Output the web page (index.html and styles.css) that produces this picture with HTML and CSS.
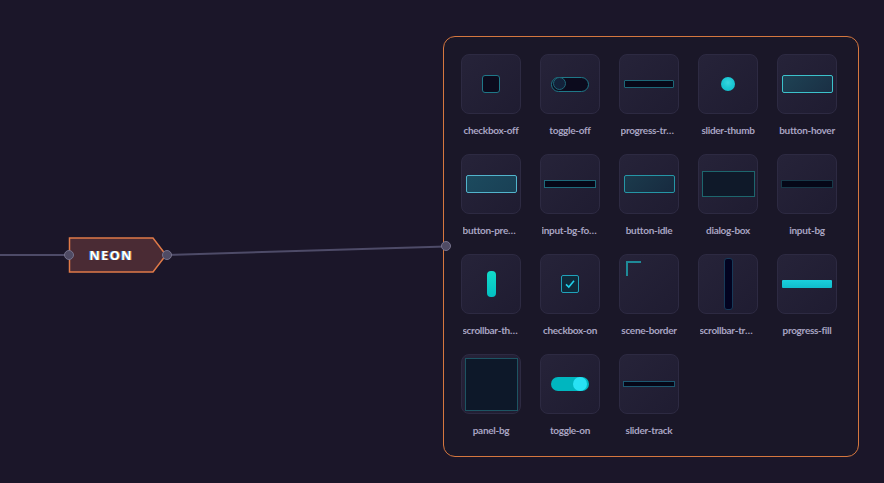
FILE: index.html
```html
<!DOCTYPE html>
<html lang="en">
<head>
  <meta charset="UTF-8">
  <meta name="viewport" content="width=device-width, initial-scale=1.0">
  <title>Neon Theme Graph</title>
  <link rel="stylesheet" href="styles.css">
</head>
<body>
  <div class="canvas">
    <!-- wires between nodes -->
    <svg class="wires" width="884" height="483" viewBox="0 0 884 483">
      <line x1="0" y1="255" x2="69" y2="255" class="wire" />
      <line x1="167" y1="255" x2="446" y2="246.5" class="wire" />
    </svg>

    <!-- theme node -->
    <div class="node">
      <svg class="node-shape" width="102" height="40" viewBox="0 0 102 40">
        <polygon points="2.5,3 86,3 99,20 86,37 2.5,37" />
      </svg>
      <span class="node-label">NEON</span>
    </div>

    <!-- asset panel -->
    <div class="panel">
      <div class="grid">
        <div class="asset"><div class="tile"><div class="ic checkbox-off"></div></div><div class="name">checkbox-off</div></div>
        <div class="asset"><div class="tile"><div class="ic toggle-off"><span class="knob"></span></div></div><div class="name">toggle-off</div></div>
        <div class="asset"><div class="tile"><div class="ic progress-track"></div></div><div class="name">progress-track</div></div>
        <div class="asset"><div class="tile"><div class="ic slider-thumb"></div></div><div class="name">slider-thumb</div></div>
        <div class="asset"><div class="tile"><div class="ic button-hover"></div></div><div class="name">button-hover</div></div>

        <div class="asset"><div class="tile"><div class="ic button-pressed"></div></div><div class="name">button-pressed</div></div>
        <div class="asset"><div class="tile"><div class="ic input-bg-focus"></div></div><div class="name">input-bg-focus</div></div>
        <div class="asset"><div class="tile"><div class="ic button-idle"></div></div><div class="name">button-idle</div></div>
        <div class="asset"><div class="tile"><div class="ic dialog-box"></div></div><div class="name">dialog-box</div></div>
        <div class="asset"><div class="tile"><div class="ic input-bg"></div></div><div class="name">input-bg</div></div>

        <div class="asset"><div class="tile"><div class="ic scrollbar-thumb"></div></div><div class="name">scrollbar-thumb</div></div>
        <div class="asset"><div class="tile"><div class="ic checkbox-on">
          <svg width="12" height="12" viewBox="0 0 12 12"><path d="M2 6.3 L4.8 9 L10 2.8" /></svg>
        </div></div><div class="name">checkbox-on</div></div>
        <div class="asset"><div class="tile tile-corner"><div class="ic scene-border"></div></div><div class="name">scene-border</div></div>
        <div class="asset"><div class="tile"><div class="ic scrollbar-track"></div></div><div class="name">scrollbar-track</div></div>
        <div class="asset"><div class="tile"><div class="ic progress-fill"></div></div><div class="name">progress-fill</div></div>

        <div class="asset"><div class="tile"><div class="ic panel-bg"></div></div><div class="name">panel-bg</div></div>
        <div class="asset"><div class="tile"><div class="ic toggle-on"><span class="knob"></span></div></div><div class="name">toggle-on</div></div>
        <div class="asset"><div class="tile"><div class="ic slider-track"></div></div><div class="name">slider-track</div></div>
      </div>
    </div>
    <span class="port port-in"></span>
    <span class="port port-out"></span>
    <span class="port port-panel"></span>
  </div>
</body>
</html>
```

FILE: styles.css
```css
body {
  margin: 0;
  background: #1b1629;
  font-family: Lato, "Noto Sans", sans-serif;
  overflow: hidden;
}
.canvas {
  position: relative;
  width: 884px;
  height: 483px;
}
.wires {
  position: absolute;
  left: 0;
  top: 0;
}
.wire {
  stroke: #4e4b68;
  stroke-width: 2;
}

/* theme node */
.node {
  position: absolute;
  left: 67px;
  top: 235px;
  width: 102px;
  height: 40px;
  display: flex;
  align-items: center;
}
.node-shape {
  position: absolute;
  left: 0;
  top: 0;
}
.node-shape polygon {
  fill: #4a2b34;
  stroke: #e07a48;
  stroke-width: 1.5;
}
.node-label {
  position: relative;
  width: 88px;
  text-align: center;
  color: #fff;
  font-family: "Open Sans", sans-serif;
  font-weight: 700;
  font-size: 13px;
  letter-spacing: 1.2px;
  text-shadow: -1px 0 rgba(40, 150, 255, 0.7), 1px 0 rgba(255, 160, 60, 0.6);
}
.port {
  position: absolute;
  width: 8px;
  height: 8px;
  border-radius: 50%;
  background: #4f4b64;
  border: 1px solid #76728c;
}
.port-in { left: 64px; top: 250px; }
.port-out { left: 162px; top: 250px; }
.port-panel { left: 441px; top: 241px; }

/* asset panel */
.panel {
  position: absolute;
  left: 443px;
  top: 36px;
  width: 414px;
  height: 419px;
  border: 1px solid #d5773f;
  border-radius: 12px;
  background: #1a1728;
}
.grid {
  display: grid;
  grid-template-columns: repeat(5, 60px);
  column-gap: 19px;
  row-gap: 17px;
  padding: 17px 0 0 17px;
}
.asset {
  display: flex;
  flex-direction: column;
  align-items: center;
}
.tile {
  width: 58px;
  height: 58px;
  border: 1px solid #2d2a42;
  border-radius: 8px;
  background: linear-gradient(135deg, #262339, #1f1c31);
  display: flex;
  align-items: center;
  justify-content: center;
}
.name {
  margin-top: 9px;
  width: 57px;
  height: 14px;
  line-height: 14px;
  font-size: 10px;
  font-weight: 700;
  letter-spacing: -0.3px;
  color: #a8a4c2;
  text-align: center;
  white-space: nowrap;
  overflow: hidden;
  text-overflow: ellipsis;
}

/* asset previews */
.ic { box-sizing: border-box; }
.checkbox-off {
  width: 18px;
  height: 18px;
  border: 1.5px solid #1f7888;
  border-radius: 3px;
  background: #0c0b1d;
}
.toggle-off {
  position: relative;
  width: 38px;
  height: 15px;
  border: 1.5px solid #1f7888;
  border-radius: 8px;
  background: #0c0b1d;
}
.toggle-off .knob {
  position: absolute;
  left: 1px;
  top: -0.5px;
  width: 13px;
  height: 13px;
  border-radius: 50%;
  border: 1.5px solid #1f6878;
  box-sizing: border-box;
  background: #13223a;
}
.progress-track {
  width: 50px;
  height: 8px;
  border: 1.5px solid #1c6878;
  border-radius: 1px;
  background: #070818;
}
.slider-thumb {
  width: 14px;
  height: 14px;
  border-radius: 50%;
  background: radial-gradient(circle at 50% 40%, #3ad6df 0, #1cc8d4 45%, #10b8c6 100%);
}
.button-hover {
  width: 51px;
  height: 18px;
  border: 1.5px solid #3cc2cb;
  border-radius: 2px;
  background: linear-gradient(135deg, #1e4254, #1a2f44);
}
.button-pressed {
  width: 51px;
  height: 18px;
  border: 1.5px solid #52b4cc;
  border-radius: 2px;
  background: linear-gradient(135deg, #1c4a5e, #194055);
}
.input-bg-focus {
  width: 52px;
  height: 8px;
  border: 1.5px solid #1d6a7a;
  background: #050717;
}
.button-idle {
  width: 51px;
  height: 18px;
  border: 1.5px solid #2596a6;
  border-radius: 2px;
  background: linear-gradient(135deg, #1b3a4c, #172a3f);
}
.dialog-box {
  width: 53px;
  height: 26px;
  border: 1px solid #1d666d;
  background: #0f1929;
}
.input-bg {
  width: 52px;
  height: 8px;
  border: 1.5px solid #173848;
  background: #050717;
}
.scrollbar-thumb {
  width: 9px;
  height: 26px;
  border-radius: 4px;
  background: linear-gradient(180deg, #12dcc9, #03bfc3);
}
.checkbox-on {
  width: 18px;
  height: 18px;
  border: 1.5px solid #20a2ba;
  border-radius: 2px;
  background: #0f2a3a;
  display: flex;
  align-items: center;
  justify-content: center;
}
.checkbox-on svg path {
  fill: none;
  stroke: #20d0ea;
  stroke-width: 1.6;
}
.tile-corner {
  align-items: flex-start;
  justify-content: flex-start;
}
.scene-border {
  margin: 6px 0 0 6px;
  width: 15px;
  height: 15px;
  border-left: 2px solid #1f8a98;
  border-top: 2px solid #1f8a98;
}
.scrollbar-track {
  width: 9px;
  height: 52px;
  border: 1.5px solid #173a58;
  border-radius: 3px;
  background: #020320;
}
.progress-fill {
  width: 50px;
  height: 8px;
  border-radius: 1px;
  background: linear-gradient(180deg, #1ad0dc 0, #10bccb 100%);
}
.panel-bg {
  width: 53px;
  height: 53px;
  border: 1.5px solid #1d5462;
  background: #0d1829;
}
.toggle-on {
  position: relative;
  width: 38px;
  height: 14px;
  border-radius: 7px;
  background: #00b6bf;
}
.toggle-on .knob {
  position: absolute;
  right: 2px;
  top: 0;
  width: 14px;
  height: 14px;
  border-radius: 50%;
  background: #28e2f4;
}
.slider-track {
  width: 52px;
  height: 6px;
  border: 1.5px solid #1c5870;
  background: #050717;
}
```
